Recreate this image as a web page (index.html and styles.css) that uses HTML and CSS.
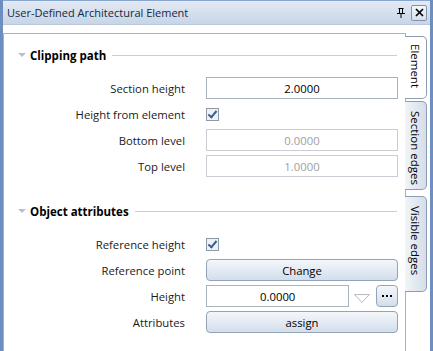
FILE: index.html
```html
<html lang="en">
<head>
  <meta charset="UTF-8">
  <title>User-Defined Architectural Element</title>
  <link rel="stylesheet" href="styles.css">
</head>
<body>
  <div class="window">
    <div class="titlebar">
      <span class="title">User-Defined Architectural Element</span>
      <span class="pin">
        <svg width="8" height="10" viewBox="0 0 8 10"><path d="M1.5 0.5h5M2.5 0.5v5M5.5 0.5v5M0 5.5h8M4 5.5v4.5" stroke="#000" stroke-width="1" fill="none"/></svg>
      </span>
      <span class="close">
        <svg width="9" height="9" viewBox="0 0 9 9"><path d="M1 1l7 7M8 1l-7 7" stroke="#000" stroke-width="1.7"/></svg>
      </span>
    </div>

    <div class="content">
      <div class="panel">
        <div class="section">
          <div class="section-head"><span class="arrow"></span><span class="caption">Clipping path</span><span class="rule"></span></div>
          <div class="rows">
            <label>Section height</label>
            <div class="field">2.0000</div>
            <label>Height from element</label>
            <div><span class="check"></span></div>
            <label>Bottom level</label>
            <div class="field disabled">0.0000</div>
            <label>Top level</label>
            <div class="field disabled">1.0000</div>
          </div>
        </div>

        <div class="section">
          <div class="section-head"><span class="arrow"></span><span class="caption">Object attributes</span><span class="rule"></span></div>
          <div class="rows">
            <label>Reference height</label>
            <div><span class="check"></span></div>
            <label>Reference point</label>
            <div class="btn">Change</div>
            <label>Height</label>
            <div class="combo">
              <div class="field">0.0000</div>
              <svg class="drop" width="16" height="9" viewBox="0 0 16 9"><path d="M0.5 0.5h15l-7.5 8z" fill="none" stroke="#b4b9bf"/></svg>
              <div class="btn more">
                <svg width="10" height="2" viewBox="0 0 10 2"><rect x="0" width="2" height="2"/><rect x="4" width="2" height="2"/><rect x="8" width="2" height="2"/></svg>
              </div>
            </div>
            <label>Attributes</label>
            <div class="btn">assign</div>
          </div>
        </div>
      </div>

      <div class="tabs">
        <div class="tab active"><span>Element</span></div>
        <div class="tab"><span>Section edges</span></div>
        <div class="tab"><span>Visible edges</span></div>
      </div>
    </div>
  </div>
</body>
</html>
```

FILE: styles.css
```css
body{
  margin: 0;
  font-family: 'Open Sans', 'Noto Sans', sans-serif;
  font-size: 11.3px;
  color: #000;
}
.window{
  width: 433px;
  height: 351px;
  box-sizing: border-box;
  border-left: 3px solid #6d8fc0;
  border-right: 3px solid #6d8fc0;
  background: white;
  display: flex;
  flex-direction: column;
  overflow: hidden;
}
.titlebar{
  flex-shrink: 0;
  height: 25px;
  box-sizing: border-box;
  border-top: 1px solid #8aa7cf;
  border-bottom: 1px solid #b9c8db;
  background: linear-gradient(#e3eaf4, #c7d5e7);
  display: flex;
  align-items: center;
  padding: 0 3px 0 4px;
}
.title{
  flex: 1;
  font-size: 11px;
  color: #15283f;
}
.pin{
  width: 8px;
  height: 10px;
  margin-right: 6px;
  display: flex;
}
.close{
  width: 16px;
  height: 16px;
  box-sizing: border-box;
  border: 1px solid #7f93ad;
  border-radius: 2px;
  background: linear-gradient(#f4f7fb, #d5dfeb);
  display: flex;
  align-items: center;
  justify-content: center;
}
.content{
  flex: 1;
  min-height: 0;
  display: flex;
  padding-top: 8px;
}
.panel{
  flex: 1;
  border: 1px solid #a5b3c5;
  border-bottom: 0;
  padding: 13px 0 0 14px;
}
.tabs{
  width: 24px;
  padding-top: 3px;
  display: flex;
  flex-direction: column;
}
.tab{
  box-sizing: border-box;
  margin-left: -1px;
  border: 1px solid #8c9cb2;
  border-left: 0;
  border-radius: 0 5px 5px 0;
  background: linear-gradient(90deg, #f2f5f9, #d4dde9);
  display: flex;
  justify-content: center;
  padding-top: 9px;
  margin-top: 4px;
  width: 22px;
}
.tab span{
  writing-mode: vertical-rl;
  font-size: 11.5px;
}
.tab.active{
  background: white;
  height: 63px;
  margin-top: 0;
  margin-bottom: -2px;
  padding-top: 7px;
  z-index: 1;
}
.tab:nth-child(2){
  height: 89px;
}
.tab:nth-child(3){
  height: 96px;
  margin-top: 6px;
}
.section{
  margin-bottom: 26px;
}
.section:last-child{
  margin-bottom: 0;
}
.section-head{
  display: flex;
  align-items: center;
  height: 16px;
}
.arrow{
  width: 0;
  height: 0;
  border-left: 4px solid transparent;
  border-right: 4px solid transparent;
  border-top: 4px solid #b3c2d3;
  margin-right: 4px;
}
.caption{
  font-weight: bold;
  font-size: 11.5px;
  margin-right: 6px;
}
.rule{
  flex: 1;
  height: 1px;
  background: #c2cfdd;
  margin-right: 8px;
}
.rows{
  display: grid;
  grid-template-columns: 167px 192px;
  grid-auto-rows: 22px;
  column-gap: 21px;
  row-gap: 4px;
  align-items: center;
  margin-top: 14px;
}
label{
  text-align: right;
  color: #1a1a1a;
}
.field{
  height: 22px;
  box-sizing: border-box;
  border: 1px solid #a9b2bd;
  display: flex;
  align-items: center;
  justify-content: center;
}
.field.disabled{
  color: #a0a0a0;
  border-color: #c9ced4;
}
.check{
  display: block;
  width: 13px;
  height: 13px;
  box-sizing: border-box;
  border: 1px solid #8e99a6;
  background: #eef1f5;
  position: relative;
}
.check::after{
  content: "";
  position: absolute;
  left: 3px;
  top: 0;
  width: 3px;
  height: 7px;
  border: solid #3b5f95;
  border-width: 0 2px 2px 0;
  transform: rotate(40deg);
}
.btn{
  height: 22px;
  box-sizing: border-box;
  border: 1px solid #93a3b8;
  border-radius: 4px;
  background: linear-gradient(#f4f7fb, #d3deeb);
  display: flex;
  align-items: center;
  justify-content: center;
}
.combo{
  display: flex;
  align-items: center;
}
.combo .field{
  width: 145px;
}
.drop{
  margin: 4px 6px 0 5px;
}
.more{
  width: 22px;
}
```
